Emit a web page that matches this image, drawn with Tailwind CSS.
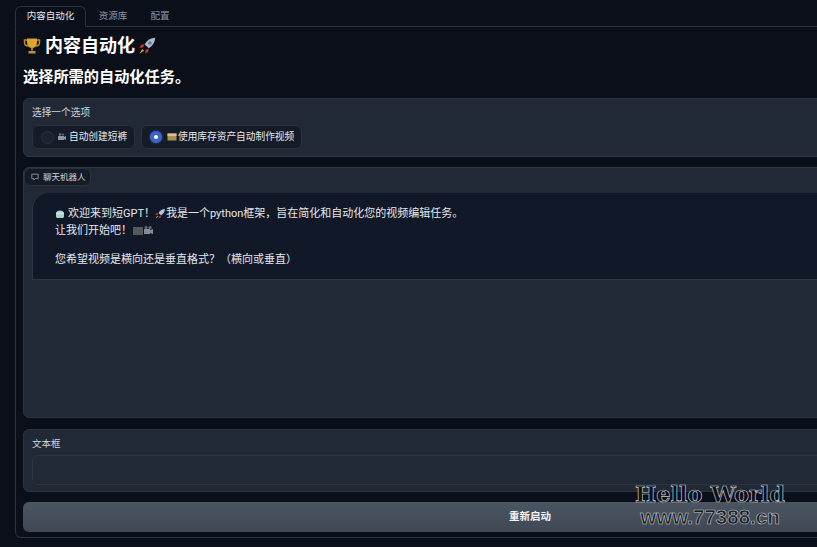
<!DOCTYPE html>
<html lang="zh-CN">
<head>
    <meta charset="UTF-8">
    <title>内容自动化</title>
    <script src="https://cdn.jsdelivr.net/npm/@tailwindcss/browser@4"></script>
</head>
<body class="relative h-[547px] w-[817px] overflow-hidden bg-[#0b0f19] font-['Inter','Noto_Sans_CJK_SC',sans-serif] text-[#f3f4f6]">
    <div class="w-[1030px] pl-[15px] pt-[6px]">
        <!-- tabs -->
        <div class="flex h-[21px] w-[1030px] border-b border-[#2b3340] text-[9.500px] text-[#8b93a1]">
            <div class="flex h-[21px] w-[71px] items-center justify-center rounded-t-md border border-b-[#0b0f19] border-[#2b3340] bg-[#0b0f19] text-[#e5e7eb]">内容自动化</div>
            <div class="flex w-[54px] items-center justify-center">资源库</div>
            <div class="flex w-[40px] items-center justify-center">配置</div>
        </div>
        <div class="h-[511px] w-[1030px] rounded-b-md border border-t-0 border-[#2b3340] px-[7px]">
            <!-- headings -->
            <div class="flex h-[35px] items-center pt-[2px]">
                <svg class="mr-[4px] h-[18px] w-[18px]" viewBox="0 0 18 18">
                    <path d="M4 3H1.500v2.500C1.500 8 3.500 9 5.500 9M14 3h2.500v2.500C16.500 8 14.500 9 12.500 9" fill="none" stroke="#b98a2a" stroke-width="1.500"/>
                    <path d="M4 1.500h10v4c0 3.500-2.500 5.500-5 5.500S4 9 4 5.500z" fill="#dba52f"/>
                    <path d="M8 10.500h2v3H8z" fill="#a8781f"/>
                    <path d="M5.500 14h7v2.500h-7z" fill="#c4922c"/>
                </svg>
                <span class="text-[18px] leading-none font-bold text-white">内容自动化</span>
                <svg class="ml-[2px] h-[20px] w-[20px]" viewBox="0 0 17 17">
                    <path d="M15.500 1.500c-4 .3-6.800 2-9 5.500l3.500 3.500c3.500-2.200 5.200-5 5.500-9z" fill="#aeb8c6"/>
                    <circle cx="11" cy="6" r="1.500" fill="#4b7fb5"/>
                    <path d="M6.500 7 3.500 7.500 2 10l3.200-.3zM10 10.500 9.500 13.500 7 15l.3-3.200z" fill="#b93636"/>
                    <path d="M4.500 11 2 15l4-2.500z" fill="#e8a33c"/>
                </svg>
            </div>
            <h2 class="mt-[2px] h-[26px] text-[15.200px] leading-[26px] font-bold text-white">选择所需的自动化任务。</h2>

            <!-- radio block -->
            <div class="mt-[8px] h-[59px] w-[1014px] rounded-md border border-[#2c3542] bg-[#202935] px-[8px] pt-[7px]">
                <div class="h-[14px] text-[9.700px] leading-[14px] text-[#d1d5db]">选择一个选项</div>
                <div class="mt-[5px] flex gap-[6px] text-[9.700px] text-[#e5e7eb]">
                    <div class="flex h-[24px] w-[103px] items-center rounded-md border border-[#2a3240] bg-[#151c28] pl-[8px]">
                        <span class="h-[13px] w-[13px] rounded-full border border-[#2a3240] bg-[#1b2330]"></span>
                        <svg class="mr-[2px] ml-[3px] h-[10px] w-[10px]" viewBox="0 0 10 10">
                            <path d="M1 4h6v4H1zM7 5l2-1v4L7 7z" fill="#8f97a3"/>
                            <circle cx="3" cy="2.500" r="1.300" fill="#6b7380"/>
                            <circle cx="6" cy="2.500" r="1" fill="#6b7380"/>
                        </svg>
                        <span>自动创建短裤</span>
                    </div>
                    <div class="flex h-[24px] w-[161px] items-center rounded-md border border-[#2a3240] bg-[#151c28] pl-[8px]">
                        <span class="flex h-[12px] w-[12px] items-center justify-center rounded-full bg-[#3d63c9] shadow-[0_0_2px_#3d63c9]">
                            <span class="h-[4px] w-[4px] rounded-full bg-white"></span>
                        </span>
                        <svg class="mr-[1px] ml-[5px] h-[10px] w-[10px]" viewBox="0 0 10 10">
                            <path d="M.5 1.500h9v7h-9z" fill="#a98d56"/>
                            <path d="M.5 1.500h9V4h-9z" fill="#d8c48d"/>
                        </svg>
                        <span>使用库存资产自动制作视频</span>
                    </div>
                </div>
            </div>

            <!-- chatbot -->
            <div class="relative mt-[10px] h-[251px] w-[1014px] rounded-md border border-[#2c3542] bg-[#202935] px-[8px] pt-[25px]">
                <div class="absolute top-0 left-0 flex h-[18px] w-[67px] items-center rounded-md border border-[#2a3240] bg-[#151c28] pl-[6px] text-[8.500px] text-[#d1d5db]">
                    <svg class="mr-[4px] h-[8px] w-[8px]" viewBox="0 0 10 10" fill="none" stroke="#9ca3af" stroke-width="1">
                        <path d="M1 1.500h8v5.500H5.500L3.500 8.800V7H1z"/>
                    </svg>
                    <span>聊天机器人</span>
                </div>
                <div class="h-[87px] w-[990px] rounded-tl-[16px] rounded-br-md border-b border-l border-[#2c3542] bg-[#111827] pt-[12px] pl-[22px] font-['Roboto','Noto_Sans_CJK_SC',sans-serif] text-[11px] leading-[17px] text-[#e5e7eb]">
                    <div class="flex h-[17px] items-center">
                        <svg class="mr-[3px] h-[10px] w-[10px]" viewBox="0 0 10 10">
                            <path d="M1 4.500C1 2.500 3 1.500 5 1.500s4 1 4 3v3c0 1-1 1.500-2 1.500H3C2 9 1 8.500 1 7.500z" fill="#a9d6cf"/>
                            <path d="M1 3.800h8v1H1z" fill="#e4efec"/>
                        </svg>
                        <span>欢迎来到短GPT！</span>
                        <svg class="-ml-[1px] h-[12px] w-[12px]" viewBox="0 0 17 17">
                            <path d="M15.500 1.500c-4 .3-6.800 2-9 5.500l3.500 3.500c3.500-2.200 5.200-5 5.500-9z" fill="#b8c2d0"/>
                            <path d="M6.500 7 3.500 7.500 2 10l3.200-.3zM10 10.500 9.500 13.500 7 15l.3-3.200z" fill="#c23b3b"/>
                            <path d="M4.500 11 2 15l4-2.500z" fill="#e8a33c"/>
                        </svg>
                        <span>我是一个python框架，旨在简化和自动化您的视频编辑任务。</span>
                    </div>
                    <div class="flex h-[17px] items-center">
                        <span>让我们开始吧！</span>
                        <svg class="h-[11px] w-[22px]" viewBox="0 0 22 11">
                            <path d="M1 2h10v8H1z" fill="#55595f"/>
                            <path d="M12 4h6v5h-6zM18 5l3-1v5l-3-1z" fill="#868c95"/>
                            <circle cx="14" cy="2.500" r="1.500" fill="#6b7380"/>
                            <circle cx="18" cy="2.500" r="1.500" fill="#6b7380"/>
                        </svg>
                    </div>
                    <div class="mt-[12px] h-[17px]">您希望视频是横向还是垂直格式？（横向或垂直）</div>
                </div>
            </div>

            <!-- text box -->
            <div class="mt-[11px] h-[63px] w-[1014px] rounded-md border border-[#2c3542] bg-[#202935] px-[8px] pt-[7px]">
                <div class="h-[14px] text-[9.500px] leading-[14px] text-[#d1d5db]">文本框</div>
                <div class="mt-[4px] h-[30px] w-[996px] rounded-md border border-[#2c3542] bg-[#202935]"></div>
            </div>

            <!-- restart button -->
            <div class="mt-[10px] flex h-[30px] w-[1014px] items-center justify-center rounded-md bg-gradient-to-b from-[#4b5563] to-[#3f4854] text-[10.500px] font-bold text-[#f3f4f6]">重新启动</div>
        </div>
    </div>

    <!-- watermark -->
    <div class="absolute top-[481px] left-[635px] flex w-[150px] flex-col items-center">
        <div class="h-[27px] font-['DejaVu_Serif',serif] text-[22.500px] leading-[27px] font-bold whitespace-nowrap text-[#0d0f13] [-webkit-text-stroke:0.7px_#c4c7cc]">Hello World</div>
        <div class="h-[18px] font-['Liberation_Sans',sans-serif] text-[20.500px] leading-[18px] font-bold whitespace-nowrap text-[#1a1d24] [-webkit-text-stroke:0.6px_#c4c7cc]">www.77388.cn</div>
    </div>
</body>
</html>
